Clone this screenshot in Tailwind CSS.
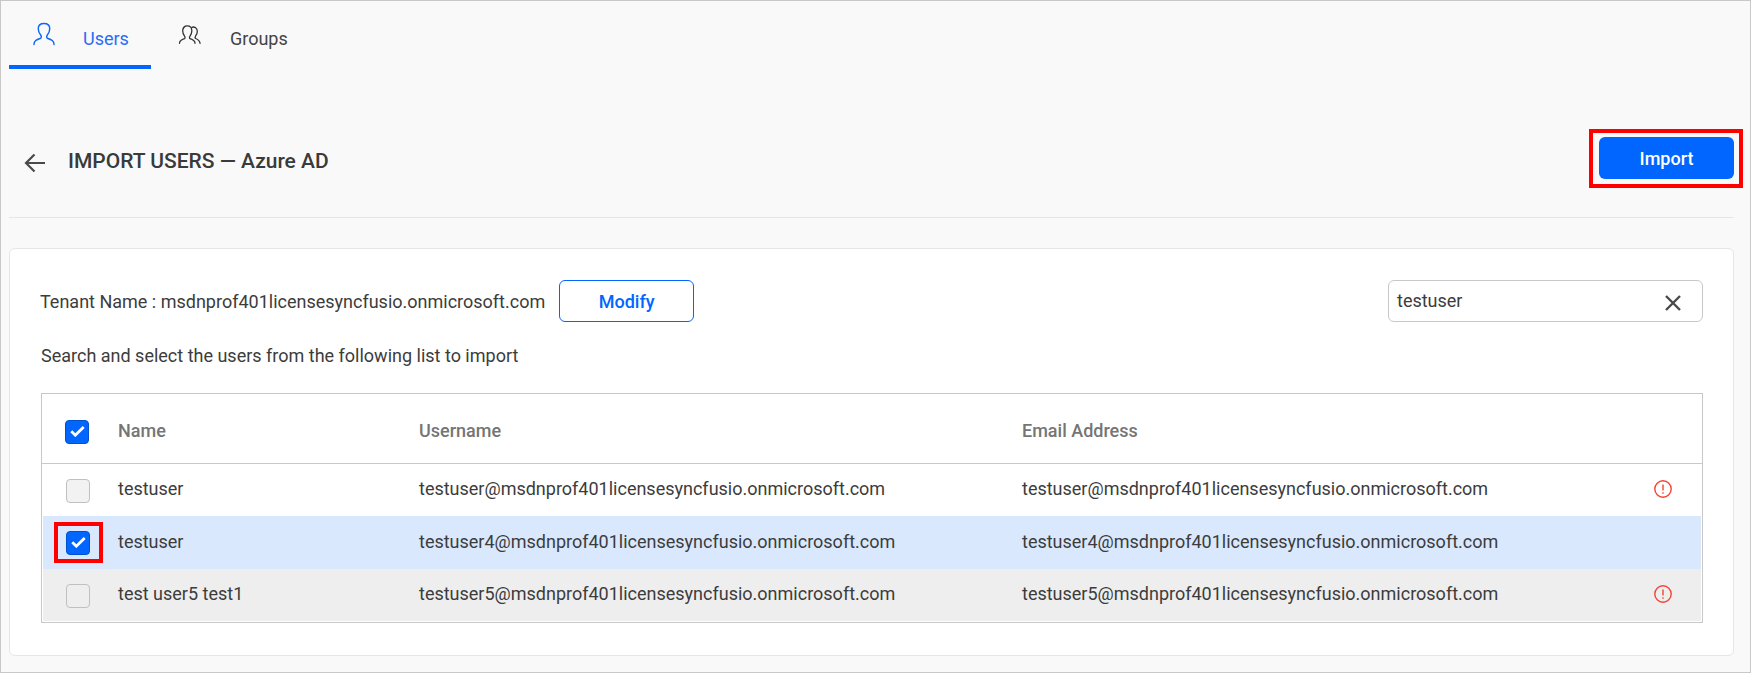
<!DOCTYPE html>
<html>
<head>
<meta charset="utf-8">
<script src="https://cdn.jsdelivr.net/npm/@tailwindcss/browser@4"></script>
</head>
<body class="font-['Roboto',sans-serif] text-[18px] text-[#3c3c3c]">
<div class="w-[1751px] h-[673px] bg-[#f9f9f9] border border-[#c8c8c8] overflow-hidden">
  <div class="flex pl-[8px] h-[68px]">
    <div class="w-[142px] h-[68px] border-b-4 border-[#0066ff] flex items-start pl-[24px] pt-[21px] gap-[28px] text-[#2a6cf6]">
      <svg class="w-[22px] h-[24px]" viewBox="0 0 23 24" fill="none" stroke="#0f66ff" stroke-width="1.500" stroke-linecap="round"><path d="M1 23c0-4 2.500-5 7-6.500 1-.5.800-2.500 0-3.500C6 10.500 5.500 8 5.500 6.500 5.500 3 8 1 11.500 1s6 2 6 5.500c0 1.500-.5 4-2.500 6.500-.8 1-1 3 0 3.500 4.500 1.500 7 2.500 7 6.500"/></svg>
      <span class="leading-[24px] pt-[5px]">Users</span>
    </div>
    <div class="h-[68px] flex items-start pl-[27px] pt-[24px] gap-[28px] text-[#444]">
      <svg class="w-[24px] h-[21px]" viewBox="0 0 25 23" fill="none" stroke="#333" stroke-width="1.400" stroke-linecap="round"><path d="M1 20c0-3 2-3.800 5.500-5 .8-.5.600-2 0-2.800C5 10 4.500 8 4.500 6.500 4.500 3 6.800 1 9.500 1s5 2 5 5.500c0 1.500-.5 3.500-2 5.700-.6.800-.8 2.300 0 2.800 3.500 1.200 5.500 2 5.500 5"/><path d="M14.500 2.500c3-1 6 .8 6 4.500 0 1.500-.5 3-1.800 5-.5.800-.7 2.300 0 2.800 2.500 1 4.300 1.700 4.800 5.200"/></svg>
      <span class="leading-[24px] pt-[2px]">Groups</span>
    </div>
  </div>
  <div class="ml-[8px] mr-[16px] h-[149px] border-b border-[#e6e6e6] flex items-start justify-between">
    <div class="flex items-center mt-[73px] h-[40px]">
      <svg class="ml-[15px] w-[22px] h-[20px] mt-[2px]" viewBox="0 0 22 20" fill="none" stroke="#4a4a4a" stroke-width="2.200"><path d="M21 10H2M10.500 1.500 2 10l8.500 8.500"/></svg>
      <span class="ml-[22px] text-[21px] font-medium text-[#3a3a3a]">IMPORT USERS — Azure AD</span>
    </div>
    <div class="relative mt-[68px]">
      <button class="w-[135px] h-[42px] bg-[#0066ff] rounded-[6px] text-white font-medium">Import</button>
      <div class="absolute left-[-10px] top-[-8px] w-[154px] h-[59px] border-[4px] border-[#ff0000]"></div>
    </div>
  </div>
  <div class="ml-[8px] mr-[16px] mt-[30px] h-[408px] bg-white border border-[#e6e6e6] rounded-[6px] pl-[31px] pr-[30px] pt-[31px]">
    <div class="flex justify-between h-[42px]">
      <div class="flex items-center">
        <span class="-ml-px">Tenant Name : msdnprof401licensesyncfusio.onmicrosoft.com</span>
        <button class="ml-[14px] w-[135px] h-[42px] border border-[#0066ff] rounded-[6px] text-[#0066ff] font-medium">Modify</button>
      </div>
      <div class="w-[315px] h-[42px] border border-[#c8c8c8] rounded-[6px] flex items-center justify-between pl-[8px] pr-[21px]">
        <span class="text-[#3c3c3c] -mt-[2px]">testuser</span>
        <svg class="w-[16px] h-[16px] mt-[3px]" viewBox="0 0 16 16" fill="none" stroke="#4a4a4a" stroke-width="2.400"><path d="M1 1l14 14M15 1 1 15"/></svg>
      </div>
    </div>
    <div class="mt-[22px] leading-[24px]">Search and select the users from the following list to import</div>
    <div class="mt-[25px] border border-[#c8c8c8] p-px pt-0">
      <div class="grid grid-cols-[76px_301px_603px_1fr_60px] items-center h-[70px] border-b border-[#c8c8c8] -mx-px font-medium text-[#757575]">
        <div class="pl-[23px] pt-[6px]">
          <span class="w-[24px] h-[24px] rounded-[4px] bg-[#0066ff] border border-[#0052cc] flex items-center justify-center">
            <svg class="w-[15px] h-[11px] -mt-[1px]" viewBox="0 0 15 11" fill="none" stroke="#fff" stroke-width="2.800"><path d="M1.300 5.300 5.300 9.200 13.700 1"/></svg>
          </span>
        </div>
        <div class="pt-[3px]">Name</div><div class="pt-[3px]">Username</div><div class="pt-[3px]">Email Address</div><div></div>
      </div>
      <div class="grid grid-cols-[75px_301px_603px_1fr_60px] items-center h-[52px] bg-white">
        <div class="pl-[23px] pt-[1px]"><span class="block w-[24px] h-[24px] rounded-[4px] bg-[#f2f2f2] border border-[#c0c0c0]"></span></div>
        <div class="-mt-[3px]">testuser</div>
        <div class="-mt-[3px]">testuser@msdnprof401licensesyncfusio.onmicrosoft.com</div>
        <div class="-mt-[3px]">testuser@msdnprof401licensesyncfusio.onmicrosoft.com</div>
        <div class="-mt-[3px]">
          <svg class="w-[18px] h-[18px] ml-[13px]" viewBox="0 0 18 18" fill="none" stroke="#f44336" stroke-width="1.400"><circle cx="9" cy="9" r="8.200"/><path d="M9 4.500v6M9 12.300v1.500"/></svg>
        </div>
      </div>
      <div class="grid grid-cols-[75px_301px_603px_1fr_60px] items-center h-[53px] bg-[#d9e8fd]">
        <div class="pl-[23px] relative">
          <span class="w-[24px] h-[24px] rounded-[4px] bg-[#0066ff] border border-[#0052cc] flex items-center justify-center">
            <svg class="w-[15px] h-[11px] -mt-[1px]" viewBox="0 0 15 11" fill="none" stroke="#fff" stroke-width="2.800"><path d="M1.300 5.300 5.300 9.200 13.700 1"/></svg>
          </span>
          <div class="absolute left-[11px] top-[-9px] w-[49px] h-[41px] border-[4px] border-[#ff0000]"></div>
        </div>
        <div class="-mt-[3px]">testuser</div>
        <div class="-mt-[3px]">testuser4@msdnprof401licensesyncfusio.onmicrosoft.com</div>
        <div class="-mt-[3px]">testuser4@msdnprof401licensesyncfusio.onmicrosoft.com</div>
        <div></div>
      </div>
      <div class="grid grid-cols-[75px_301px_603px_1fr_60px] items-center h-[52px] bg-[#eeeeee]">
        <div class="pl-[23px] pt-[1px]"><span class="block w-[24px] h-[24px] rounded-[4px] bg-[#eeeeee] border border-[#c0c0c0]"></span></div>
        <div class="-mt-[3px]">test user5 test1</div>
        <div class="-mt-[3px]">testuser5@msdnprof401licensesyncfusio.onmicrosoft.com</div>
        <div class="-mt-[3px]">testuser5@msdnprof401licensesyncfusio.onmicrosoft.com</div>
        <div class="-mt-[3px]">
          <svg class="w-[18px] h-[18px] ml-[13px]" viewBox="0 0 18 18" fill="none" stroke="#f44336" stroke-width="1.400"><circle cx="9" cy="9" r="8.200"/><path d="M9 4.500v6M9 12.300v1.500"/></svg>
        </div>
      </div>
    </div>
  </div>
</div>
</body>
</html>
